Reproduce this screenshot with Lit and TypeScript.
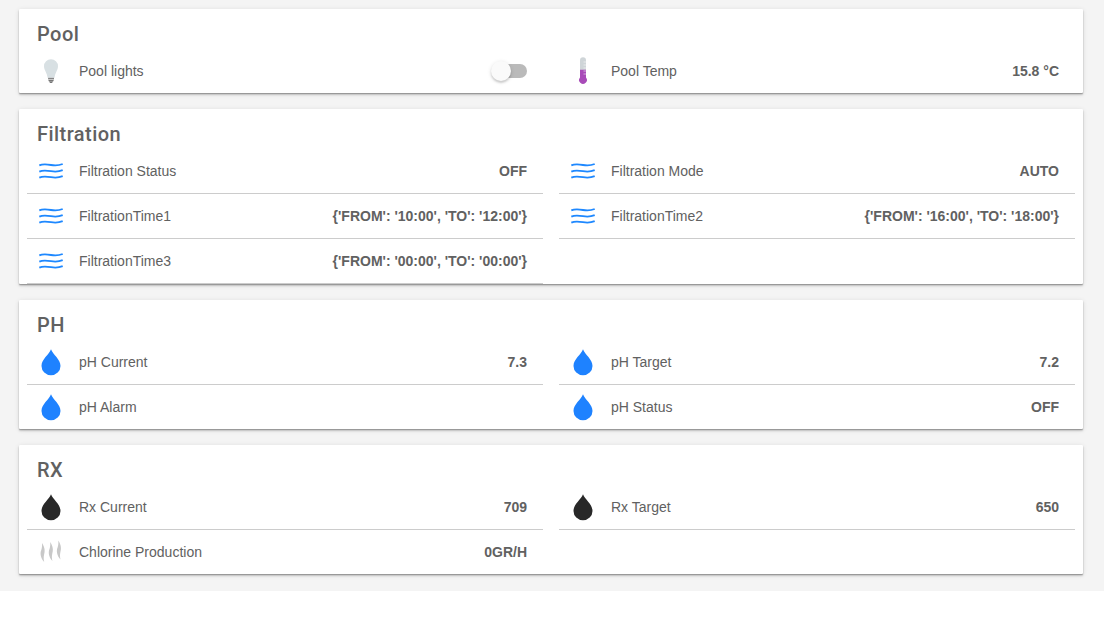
import { LitElement, html, svg, css, nothing } from "lit";
import { customElement, property } from "lit/decorators.js";

type IconName = "bulb" | "thermo" | "flow" | "drop" | "drop-dark" | "steam";

interface Item {
  icon: IconName;
  label: string;
  value?: string;
  toggle?: boolean;
  divider?: boolean;
}

interface Frame {
  title: string;
  items: Item[];
}

const drop = svg`<path d="M16 3.300C18 8.800 25.500 13.200 25.500 20A9.500 9.200 0 0 1 6.500 20C6.500 13.200 14 8.800 16 3.300Z"/>`;

const strand = "M0 0C3.200 5 3 8.500 2.100 11.500C1.500 14 1.600 16.500 2.200 19C-1.400 15 -2.200 10.500 -.7 7C.1 4.800 .2 2.500 0 0Z";

const icons = {
  bulb: svg`
    <path fill="#d8e0e3" d="M16 4.200a7 7 0 0 1 7 7c0 4-2.900 6.300-3.500 11.600h-6.900C12 17.500 9 15.200 9 11.200a7 7 0 0 1 7-7z"/>
    <path fill="#858585" d="M13.100 22.800h5.900v1.300h-5.900z"/>
    <path fill="#c4c4c4" d="M13.100 24.100h5.900v1h-5.900z"/>
    <path fill="#777" d="M13.300 25.100h5.500l-.7 1.400h-4.100z"/>
    <path fill="#777" d="M14.200 26.400h3.700l-.8 1.500h-2.100z"/>`,
  thermo: svg`
    <path fill="#cfd5d8" d="M13 16V5.300a3 3 0 0 1 6 0V16z"/>
    <path fill="#a84bb8" d="M13 14.800h6v7.700a3.900 3.900 0 1 1-6 0z"/>
    <path stroke="#fff" stroke-width=".8" opacity=".7" d="M16.500 7H19M16.500 10H19M16.500 13H19M16.500 16H19M16.500 19H19"/>`,
  flow: svg`
    <g fill="none" stroke="#1e88ff" stroke-width="1.800">
      <path d="M4.300 10.400C8 8.700 12 9.300 16 10S24 10.500 27.700 9"/>
      <path d="M4.300 16.600C8 14.900 12 15.500 16 16.200S24 16.700 27.700 15.200"/>
      <path d="M4.300 22.600C8 20.900 12 21.500 16 22.200S24 22.700 27.700 21.200"/>
    </g>`,
  drop: svg`<g fill="#1e82ff">${drop}</g>`,
  "drop-dark": svg`<g fill="#282828">${drop}</g>`,
  steam: svg`
    <g fill="#c8c8c8">
      <path transform="translate(7 7.100)" d=${strand}/>
      <path transform="translate(15.200 6.100)" d=${strand}/>
      <path transform="translate(23.300 4.500)" d=${strand}/>
    </g>`,
};

const frames: Frame[] = [
  {
    title: "Pool",
    items: [
      { icon: "bulb", label: "Pool lights", toggle: true },
      { icon: "thermo", label: "Pool Temp", value: "15.8 °C" },
    ],
  },
  {
    title: "Filtration",
    items: [
      { icon: "flow", label: "Filtration Status", value: "OFF", divider: true },
      { icon: "flow", label: "Filtration Mode", value: "AUTO", divider: true },
      { icon: "flow", label: "FiltrationTime1", value: "{'FROM': '10:00', 'TO': '12:00'}", divider: true },
      { icon: "flow", label: "FiltrationTime2", value: "{'FROM': '16:00', 'TO': '18:00'}", divider: true },
      { icon: "flow", label: "FiltrationTime3", value: "{'FROM': '00:00', 'TO': '00:00'}", divider: true },
    ],
  },
  {
    title: "PH",
    items: [
      { icon: "drop", label: "pH Current", value: "7.3", divider: true },
      { icon: "drop", label: "pH Target", value: "7.2", divider: true },
      { icon: "drop", label: "pH Alarm" },
      { icon: "drop", label: "pH Status", value: "OFF" },
    ],
  },
  {
    title: "RX",
    items: [
      { icon: "drop-dark", label: "Rx Current", value: "709", divider: true },
      { icon: "drop-dark", label: "Rx Target", value: "650", divider: true },
      { icon: "steam", label: "Chlorine Production", value: "0GR/H" },
    ],
  },
];

@customElement("item-row")
class ItemRow extends LitElement {
  @property({ attribute: false }) item!: Item;

  static styles = css`
    :host {
      display: block;
    }
    .row {
      display: flex;
      align-items: center;
      height: 44px;
      padding: 0 16px 0 8px;
      font-size: 14px;
      line-height: 20px;
      color: #616161;
    }
    .divider {
      border-bottom: 1px solid #ccc;
    }
    .icon {
      width: 32px;
      height: 32px;
      margin-right: 12px;
      flex: none;
    }
    .label {
      flex: 1;
    }
    .value {
      font-weight: 700;
      white-space: nowrap;
    }
    .track {
      display: flex;
      align-items: center;
      width: 33px;
      height: 14px;
      border-radius: 7px;
      background: #bababa;
    }
    .thumb {
      width: 20px;
      height: 20px;
      margin-left: -3px;
      flex: none;
      border-radius: 50%;
      background: #fafafa;
      box-shadow: 0 2px 2px rgba(0, 0, 0, 0.14), 0 1px 4px rgba(0, 0, 0, 0.12);
    }
  `;

  render() {
    const { icon, label, value, toggle, divider } = this.item;
    return html`<div class="row ${divider ? "divider" : ""}">
      <svg class="icon" viewBox="0 0 32 32">${icons[icon]}</svg>
      <span class="label">${label}</span>
      ${toggle ? html`<span class="track"><span class="thumb"></span></span>` : nothing}
      ${value ? html`<span class="value">${value}</span>` : nothing}
    </div>`;
  }
}

@customElement("app-root")
class AppRoot extends LitElement {
  static styles = css`
    :host {
      display: block;
      font-family: "Liberation Sans", Arial, sans-serif;
    }
    .page {
      display: flex;
      flex-direction: column;
      gap: 16px;
      box-sizing: border-box;
      padding: 9px 21px 17px 19px;
      background: #f4f4f4;
    }
    .card {
      padding: 0 8px;
      background: #fff;
      border-radius: 1px;
      box-shadow: 0 1px 1px rgba(0, 0, 0, 0.24), 0 2px 2px rgba(0, 0, 0, 0.14),
        0 1px 5px rgba(0, 0, 0, 0.12);
    }
    .title {
      box-sizing: border-box;
      height: 40px;
      margin: 0;
      padding: 9px 10px 0;
      font: 500 20px/32px Roboto, sans-serif;
      letter-spacing: 0.45px;
      color: #616161;
    }
    .items {
      display: grid;
      grid-template-columns: 1fr 1fr;
      column-gap: 16px;
    }
  `;

  render() {
    return html`<main class="page">
      ${frames.map(
        (f) => html`<section class="card">
          <h2 class="title">${f.title}</h2>
          <div class="items">${f.items.map((i) => html`<item-row .item=${i}></item-row>`)}</div>
        </section>`
      )}
    </main>`;
  }
}
